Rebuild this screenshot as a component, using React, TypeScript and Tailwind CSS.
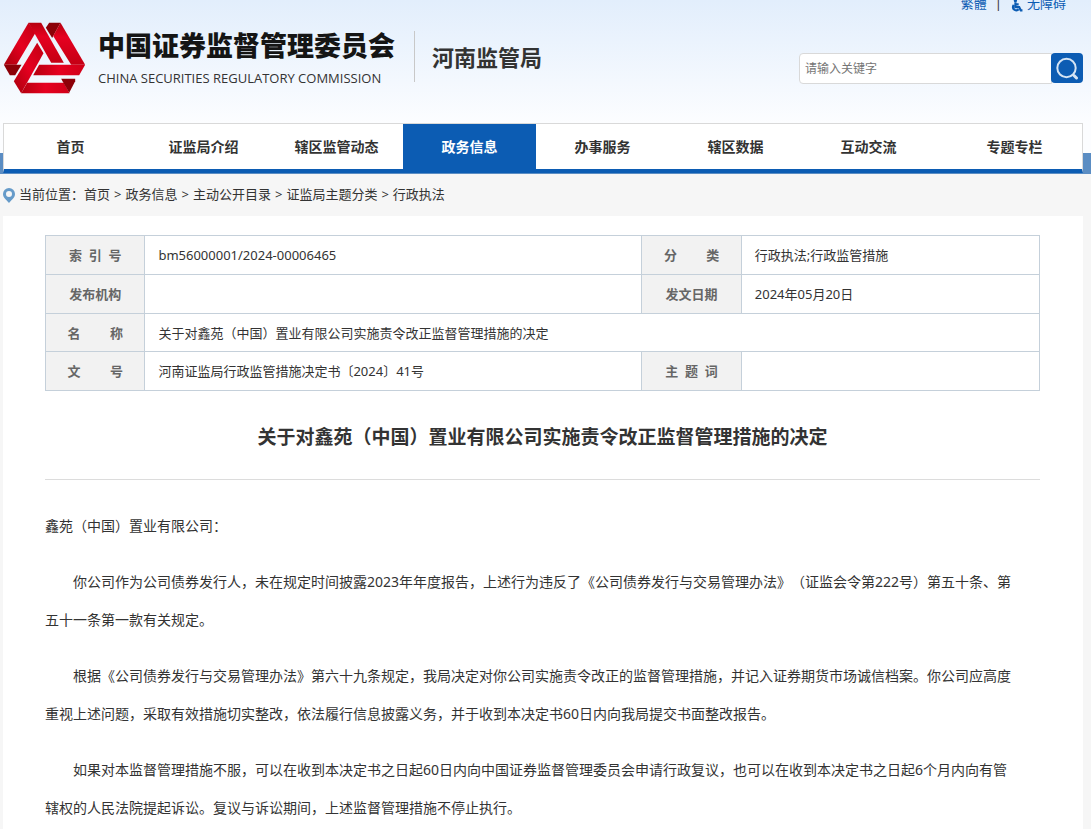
import { Fragment } from 'react';

const navItems = ['首页', '证监局介绍', '辖区监管动态', '政务信息', '办事服务', '辖区数据', '互动交流', '专题专栏'];

const crumbs = ['首页', '政务信息', '主动公开目录', '证监局主题分类', '行政执法'];

const articleTitle = '关于对鑫苑（中国）置业有限公司实施责令改正监督管理措施的决定';

const paragraphs = [
  [
    '你公司作为公司债券发行人，未在规定时间披露2023年年度报告，上述行为违反了《公司债券发行与交易管理办法》（证监会令第222号）第五十条、第',
    '五十一条第一款有关规定。',
  ],
  [
    '根据《公司债券发行与交易管理办法》第六十九条规定，我局决定对你公司实施责令改正的监督管理措施，并记入证券期货市场诚信档案。你公司应高度',
    '重视上述问题，采取有效措施切实整改，依法履行信息披露义务，并于收到本决定书60日内向我局提交书面整改报告。',
  ],
  [
    '如果对本监督管理措施不服，可以在收到本决定书之日起60日内向中国证券监督管理委员会申请行政复议，也可以在收到本决定书之日起6个月内向有管',
    '辖权的人民法院提起诉讼。复议与诉讼期间，上述监督管理措施不停止执行。',
  ],
];

const Logo = () => (
  <svg viewBox="8 34 248 216" className="h-[72px] w-[83px] shrink-0" aria-hidden="true">
    <defs>
      <linearGradient id="down" x1="0" y1="0" x2="0" y2="1">
        <stop offset="0" stopColor="#b5000f" />
        <stop offset="0.35" stopColor="#e60020" />
        <stop offset="1" stopColor="#c40014" />
      </linearGradient>
      <linearGradient id="up" x1="0" y1="1" x2="1" y2="0">
        <stop offset="0" stopColor="#a8000c" />
        <stop offset="0.5" stopColor="#e60020" />
        <stop offset="1" stopColor="#c00013" />
      </linearGradient>
      <linearGradient id="across" x1="0" y1="0" x2="1" y2="0">
        <stop offset="0" stopColor="#b5000f" />
        <stop offset="0.5" stopColor="#e60020" />
        <stop offset="1" stopColor="#d00018" />
      </linearGradient>
    </defs>
    <path d="M84 36 L10 162 H48 L105 66Z" fill="url(#up)" />
    <path d="M84 36 H122 L190 156 H152Z" fill="url(#down)" />
    <path d="M10 162 H63 L44 194 H28Z" fill="#8c0008" />
    <path d="M146 36 H180 L155 82 L136 51Z" fill="#8c0008" />
    <path d="M180 36 L254 162 H212 L158 76Z" fill="url(#down)" />
    <path d="M116 162 H254 L236 194 H98Z" fill="url(#across)" />
    <path d="M110 96 L129 128 L62 248 L40 212Z" fill="url(#up)" />
    <path d="M80 216 H190 L207 248 H62Z" fill="url(#across)" />
    <path d="M182 204 H224 V212 L206 246 L187 213Z" fill="#8c0008" />
  </svg>
);

const Header = () => (
  <header className="overflow-hidden bg-linear-to-b from-[#e2eefc] to-[#fcfdff]">
    <div className="mr-2 ml-[3px] flex h-[123px] justify-between">
      <div className="flex items-start pt-[22px]">
        <Logo />
        <div className="ml-3 pt-2 whitespace-nowrap text-[#151515]">
          <div className="text-[27px] leading-8 font-black">中国证券监督管理委员会</div>
          <div className="mt-1 font-['Open_Sans'] text-[13px] leading-6 text-[#333]">CHINA SECURITIES REGULATORY COMMISSION</div>
        </div>
        <div className="mt-[9px] ml-[19px] flex h-[51px] items-center border-l border-[#c8c8c8] pl-[17px]">
          <h1 className="text-[22px] leading-8 font-bold whitespace-nowrap text-[#333]">河南监管局</h1>
        </div>
      </div>

      <div className="flex flex-col items-end">
        <div className="-mt-[7px] mr-[17px] flex h-5 items-center text-[13px] leading-5 text-[#0c5cb3]">
          <a href="#traditional">繁體</a>
          <span className="mx-2 text-[#333]">|</span>
          <a href="#accessible" className="flex items-center gap-1">
            <svg viewBox="0 0 24 24" className="mt-1 size-[13px]" fill="none" stroke="currentColor" strokeWidth="4" aria-hidden="true">
              <circle cx="10" cy="3" r="3" fill="currentColor" stroke="none" />
              <path d="M10 6v9h7l3 6h3M10 10h6M7 11a6 6 0 1 0 9 8" />
            </svg>
            无障碍
          </a>
        </div>
        <form className="mt-10 flex" onSubmit={(e) => e.preventDefault()}>
          <input
            type="text"
            aria-label="请输入关键字"
            placeholder="请输入关键字"
            className="h-[31px] w-[253px] rounded-l border border-[#d9d9d9] bg-white px-[5px] text-xs outline-none placeholder:text-[#757575]"
          />
          <button type="submit" aria-label="搜索" className="-ml-px flex h-[30px] w-8 items-center justify-center rounded bg-[#0c5cb3]">
            <svg viewBox="0 0 24 24" className="size-6" fill="none" stroke="#d5e4f4" aria-hidden="true">
              <circle cx="11.5" cy="12" r="9.2" strokeWidth="2" />
              <path d="M19 19.5l2.5 2.5" strokeWidth="3" strokeLinecap="round" />
            </svg>
          </button>
        </form>
      </div>
    </div>
  </header>
);

const NavBar = () => (
  <nav className="bg-linear-to-b from-[#fcfdff] from-[30px] to-[#5b8dc3] to-[30px] pb-px">
    <ul className="mr-2 ml-[3px] grid grid-cols-[repeat(7,133fr)_147fr] border-x border-t border-b-4 border-[#d9d9d9] border-b-[#0c5cb3] bg-white text-center text-sm leading-[45px] font-bold text-[#333]">
      {navItems.map((item) => (
        <li key={item} className={item === '政务信息' ? 'bg-[#0c5cb3] text-white' : 'last:pl-3'}>
          <a href="#nav" className="block whitespace-nowrap">{item}</a>
        </li>
      ))}
    </ul>
  </nav>
);

const Breadcrumb = () => (
  <div className="ml-[3px] flex h-[42px] items-center text-[13px] whitespace-nowrap text-[#333]">
    <svg viewBox="0 0 12 15" className="mr-1 h-[15px] w-3" aria-hidden="true">
      <path fillRule="evenodd" fill="#669bc9" d="M6 0a6 6 0 0 1 6 6c0 3.500-3 5.500-6 9C3 11.500 0 9.500 0 6a6 6 0 0 1 6-6zm0 3a3 3 0 1 0 0 6 3 3 0 0 0 0-6z" />
    </svg>
    <span>当前位置：</span>
    {crumbs.map((crumb, i) => (
      <Fragment key={crumb}>
        {i > 0 && <span className="mx-1">&gt;</span>}
        <a href="#crumb">{crumb}</a>
      </Fragment>
    ))}
  </div>
);

const labelCell = 'border border-[#c5d0da] bg-[#f2f2f2] text-center font-bold whitespace-pre text-[#666]';
const valueCell = 'border border-[#c5d0da] px-[13px]';

const InfoTable = () => (
  <table className="w-full table-fixed border-collapse text-[13px] leading-5 text-[#333]">
    <colgroup>
      <col className="w-[10%]" />
      <col className="w-[50%]" />
      <col className="w-[10%]" />
      <col className="w-[30%]" />
    </colgroup>
    <tbody>
      <tr className="h-[39px]">
        <th scope="row" className={labelCell}>索&nbsp;&nbsp;引&nbsp;&nbsp;号</th>
        <td className={valueCell}>bm56000001/2024-00006465</td>
        <th scope="row" className={labelCell}>分&emsp;&emsp;&nbsp;类</th>
        <td className={valueCell}>行政执法;行政监管措施</td>
      </tr>
      <tr className="h-[39px]">
        <th scope="row" className={labelCell}>发布机构</th>
        <td className={valueCell}></td>
        <th scope="row" className={labelCell}>发文日期</th>
        <td className={valueCell}>2024年05月20日</td>
      </tr>
      <tr className="h-[38px]">
        <th scope="row" className={labelCell}>名&emsp;&emsp;&nbsp;称</th>
        <td colSpan={3} className={valueCell}>{articleTitle}</td>
      </tr>
      <tr className="h-[39px]">
        <th scope="row" className={labelCell}>文&emsp;&emsp;&nbsp;号</th>
        <td className={valueCell}>河南证监局行政监管措施决定书〔2024〕41号</td>
        <th scope="row" className={labelCell}>主&nbsp;&nbsp;题&nbsp;&nbsp;词</th>
        <td className={valueCell}></td>
      </tr>
    </tbody>
  </table>
);

const Article = () => (
  <article className="text-[#333]">
    <h2 className="border-b border-[#dcdcdc] pt-[30px] pb-[26px] text-center text-[19px] leading-8 font-bold">{articleTitle}</h2>
    <div className="flex flex-col gap-[18px] pt-[27px] text-sm leading-[38px] [text-spacing-trim:space-all]">
      <p>鑫苑（中国）置业有限公司：</p>
      {paragraphs.map((lines) => (
        <p key={lines[0]} className="indent-7">
          {lines[0]}
          <br />
          {lines[1]}
        </p>
      ))}
    </div>
  </article>
);

export default function App() {
  return (
    <div className="h-screen overflow-hidden bg-[#f6f6f6] font-['Noto_Sans','Noto_Sans_CJK_SC',sans-serif]">
      <Header />
      <NavBar />
      <Breadcrumb />
      <main className="mr-2 ml-[3px] bg-white pt-[19px] pr-[43px] pb-10 pl-[42px]">
        <InfoTable />
        <Article />
      </main>
    </div>
  );
}
